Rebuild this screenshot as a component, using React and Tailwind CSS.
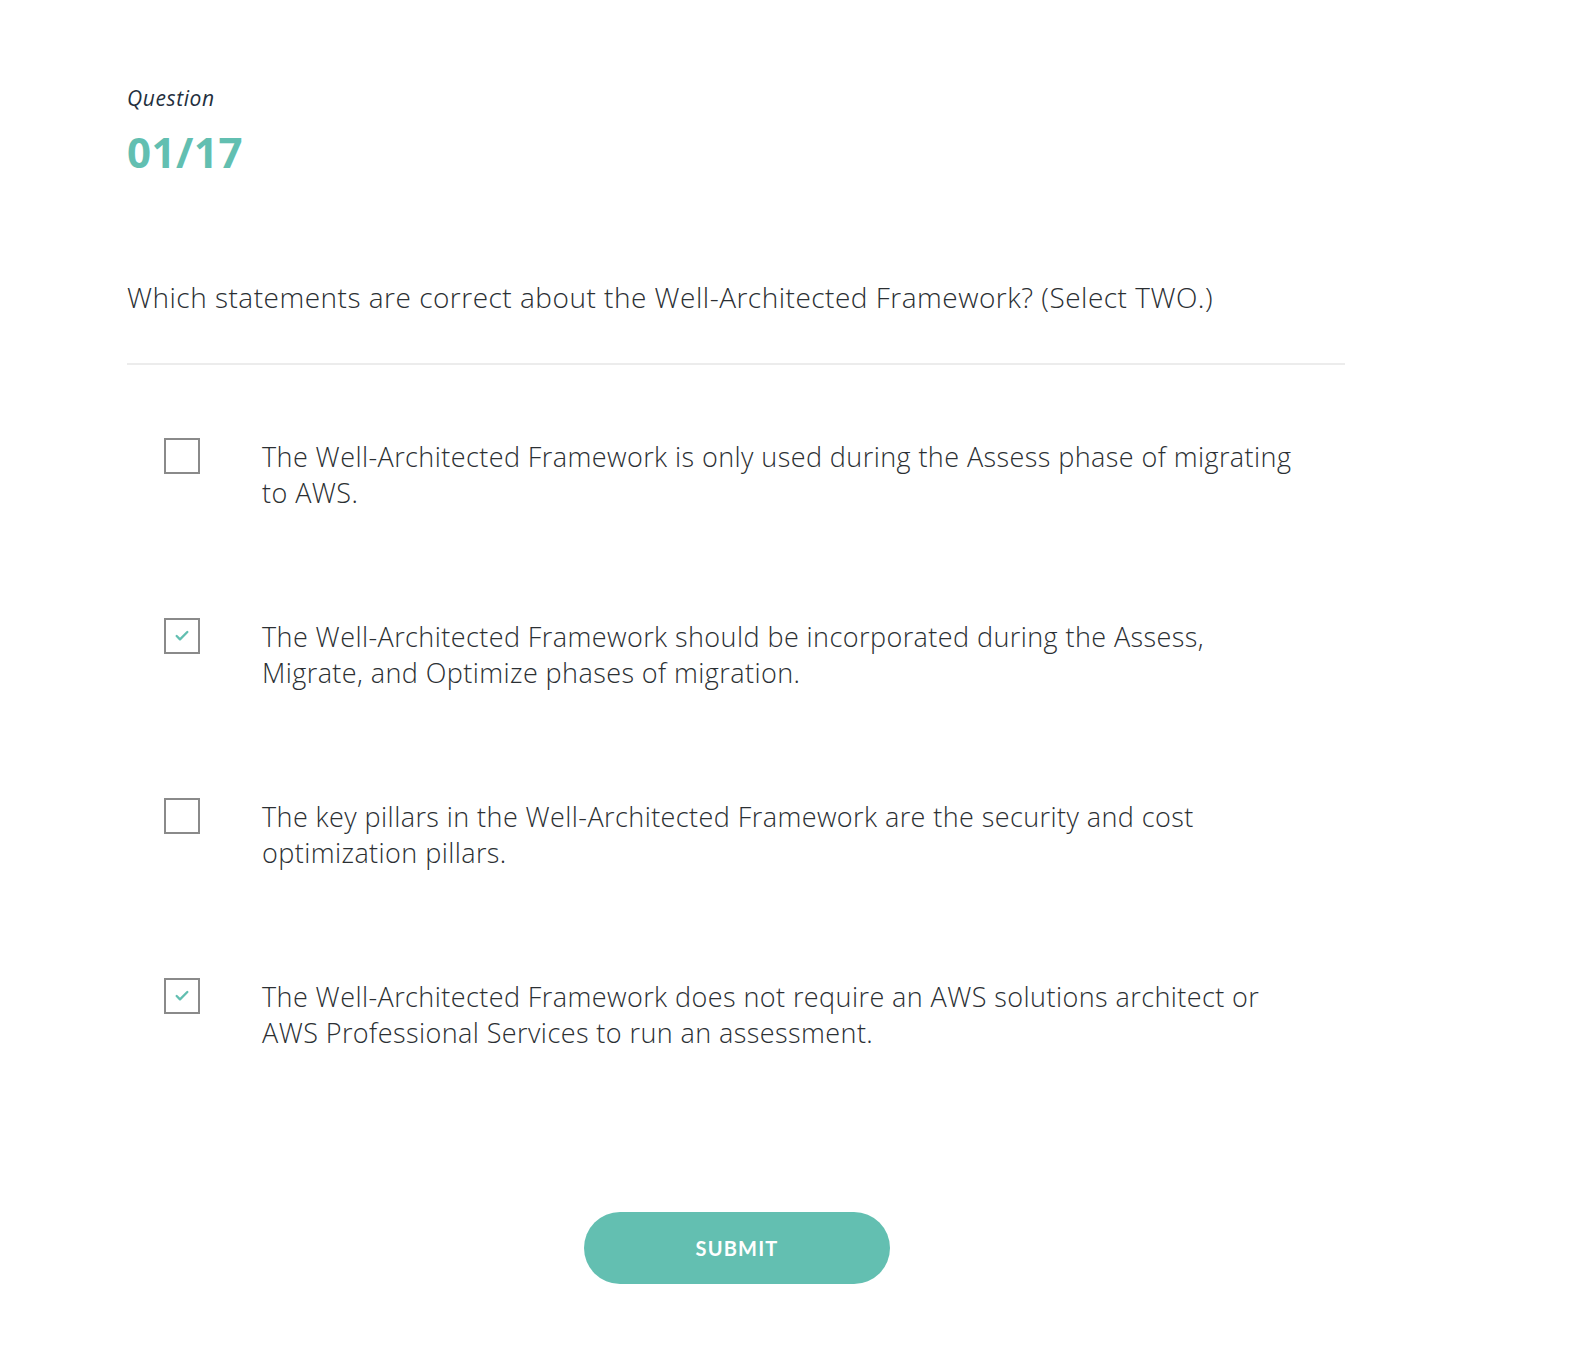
import { Check } from 'lucide-react';

const options = [
  { text: 'The Well-Architected Framework is only used during the Assess phase of migrating to AWS.', checked: false },
  { text: 'The Well-Architected Framework should be incorporated during the Assess, Migrate, and Optimize phases of migration.', checked: true },
  { text: 'The key pillars in the Well-Architected Framework are the security and cost optimization pillars.', checked: false },
  { text: 'The Well-Architected Framework does not require an AWS solutions architect or AWS Professional Services to run an assessment.', checked: true },
];

const App = () => {
  return (
    <div className="min-h-[1352px] w-full bg-white font-['Open_Sans',sans-serif] text-[#2b2f33]">
      <div className="pl-[127px] pt-[84px] w-[1345px]">
        <p className="text-[21px] italic leading-[28px] tracking-[0.6px] text-[#232f3e]">Question</p>
        <h1 className="mt-[15px] text-[42px] font-bold leading-[50px] text-[#62bfb1] tracking-[0.5px]">01/17</h1>

        <p className="mt-[102px] text-[28px] font-light leading-[36px] tracking-[0.5px] text-[#2b2f33]">
          Which statements are correct about the Well-Architected Framework? (Select TWO.)
        </p>

        <div className="mt-[48px] h-[2px] bg-[#ececec]" />

        <div className="mt-[72px] flex flex-col gap-[106px] pl-[37px]">
          {options.map((opt, i) => (
            <div key={i} className="flex items-start">
              <div className="mt-[1px] flex h-[36px] w-[36px] shrink-0 items-center justify-center border-2 border-[#8a8a8a] bg-white">
                {opt.checked && <Check size={16} strokeWidth={3.5} className="text-[#62bfb1]" />}
              </div>
              <p className="ml-[62px] mt-[2px] max-w-[1040px] text-[27px] font-light leading-[36px] tracking-[0.42px]">{opt.text}</p>
            </div>
          ))}
        </div>

        <div className="mt-[161px] pl-[457px]">
          <button
            type="button"
            className="h-[72px] w-[306px] rounded-full bg-[#63bfb1] font-['Lato',sans-serif] text-[20px] font-bold tracking-[1.2px] text-white"
          >
            SUBMIT
          </button>
        </div>
      </div>
    </div>
  );
};

export default App;
